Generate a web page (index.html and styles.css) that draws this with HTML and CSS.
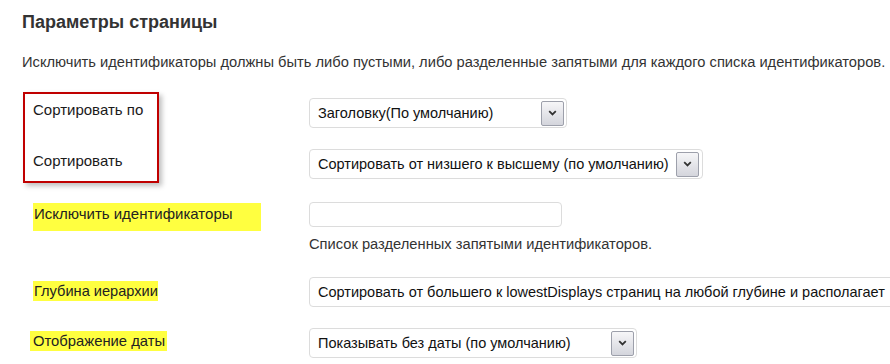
FILE: index.html
```html
<!DOCTYPE html>
<html lang="ru">
<head>
<meta charset="utf-8">
<title>Параметры страницы</title>
<link rel="stylesheet" href="styles.css">
</head>
<body>
<div class="page">
  <h2 class="title">Параметры страницы</h2>
  <p class="intro">Исключить идентификаторы должны быть либо пустыми, либо разделенные запятыми для каждого списка идентификаторов.</p>

  <div class="group">
    <div class="label-col">
      <div class="redbox">
        <div class="boxlabel">Сортировать по</div>
        <div class="boxlabel">Сортировать</div>
      </div>
    </div>
    <div class="control-stack">
      <div class="select w1"><span class="sel-text">Заголовку(По умолчанию)</span><span class="sel-btn"><svg width="9" height="6" viewBox="0 0 9 6"><path d="M1.2 1.2 L4.5 4.4 L7.8 1.2" fill="none" stroke="#333" stroke-width="1.8"/></svg></span></div>
      <div class="select w2"><span class="sel-text">Сортировать от низшего к высшему (по умолчанию)</span><span class="sel-btn"><svg width="9" height="6" viewBox="0 0 9 6"><path d="M1.2 1.2 L4.5 4.4 L7.8 1.2" fill="none" stroke="#333" stroke-width="1.8"/></svg></span></div>
    </div>
  </div>

  <div class="row row-exclude">
    <div class="label-col"><span class="hl hl-block">Исключить идентификаторы</span></div>
    <div class="control">
      <div class="input"></div>
      <div class="help">Список разделенных запятыми идентификаторов.</div>
    </div>
  </div>

  <div class="row row-depth">
    <div class="label-col"><span class="hl hl-depth">Глубина иерархии</span></div>
    <div class="control">
      <div class="select w4"><span class="sel-text">Сортировать от большего к lowestDisplays страниц на любой глубине и располагает</span></div>
    </div>
  </div>

  <div class="row row-date">
    <div class="label-col"><span class="hl hl-date">Отображение даты</span></div>
    <div class="control">
      <div class="select w5"><span class="sel-text">Показывать без даты (по умолчанию)</span><span class="sel-btn"><svg width="9" height="6" viewBox="0 0 9 6"><path d="M1.2 1.2 L4.5 4.4 L7.8 1.2" fill="none" stroke="#333" stroke-width="1.8"/></svg></span></div>
    </div>
  </div>
</div>
</body>
</html>
```

FILE: styles.css
```css
html, body {
  margin: 0;
  padding: 0;
  overflow: hidden;
  background: #fff;
}
body {
  font-family: "Liberation Sans", Arial, sans-serif;
  font-size: 14.7px;
  color: #333;
}
.page {
  padding: 0 0 0 22px;
  width: 1200px;
}
.title {
  margin: 0;
  padding-top: 11px;
  font-size: 18px;
  line-height: 22px;
  font-weight: bold;
  color: #333;
}
.intro {
  margin: 0;
  padding-top: 20px;
  line-height: 18px;
  color: #333;
  white-space: nowrap;
}
.group {
  display: flex;
  margin-top: 21px;
}
.label-col {
  width: 287px;
  flex: none;
}
.redbox {
  margin-left: 1px;
  width: 124px;
  border: 2px solid #c00000;
  padding: 1px 0 6px 8px;
  box-shadow: 3px 3px 5px rgba(0,0,0,0.25);
  color: #1a1a1a;
  font-size: 15px;
}
.boxlabel {
  height: 29px;
  line-height: 29px;
  white-space: nowrap;
}
.boxlabel + .boxlabel {
  margin-top: 22px;
}
.control-stack {
  display: flex;
  flex-direction: column;
  gap: 21px;
  padding-top: 6px;
}
.select {
  box-sizing: border-box;
  height: 30px;
  border: 1px solid #dcdcdc;
  border-radius: 4px;
  background: #fff;
  display: flex;
  align-items: center;
  justify-content: space-between;
  padding: 0 2px 0 8px;
  color: #111;
  white-space: nowrap;
  overflow: hidden;
  font-size: 14.5px;
}
.sel-text {
  line-height: 16px;
}
.sel-btn {
  box-sizing: border-box;
  width: 23px;
  height: 25px;
  border: 1px solid #9da0ab;
  border-radius: 2px;
  background: linear-gradient(#f6f6f8, #d4d5dc);
  display: flex;
  align-items: center;
  justify-content: center;
  flex: none;
}
.w1 { width: 258px; }
.w2 { width: 394px; padding-right: 3px; }
.w4 { width: 700px; justify-content: flex-start; }
.w5 { width: 328px; }
.row {
  display: flex;
}
.row-exclude {
  margin-top: 19px;
}
.hl {
  background: #ffff40;
  color: #222;
  display: inline-block;
  font-size: 15px;
  white-space: nowrap;
}
.hl-block {
  margin-left: 11px;
  width: 227px;
  height: 28px;
  line-height: 22px;
  padding-left: 1px;
  margin-top: 1px;
}
.input {
  box-sizing: border-box;
  width: 253px;
  height: 25px;
  border: 1px solid #dcdcdc;
  border-radius: 4px;
  background: #fff;
}
.help {
  margin-top: 8px;
  line-height: 18px;
  color: #333;
}
.row-depth {
  margin-top: 24px;
}
.hl-depth {
  margin-left: 11px;
  margin-top: 4px;
  height: 20px;
  line-height: 20px;
  padding-left: 1px;
  font-size: 14.6px;
}
.row-date {
  margin-top: 21px;
}
.hl-date {
  margin-left: 8px;
  margin-top: 3px;
  height: 20px;
  line-height: 20px;
  padding: 0 2px 0 3px;
  font-size: 14.8px;
}
```
